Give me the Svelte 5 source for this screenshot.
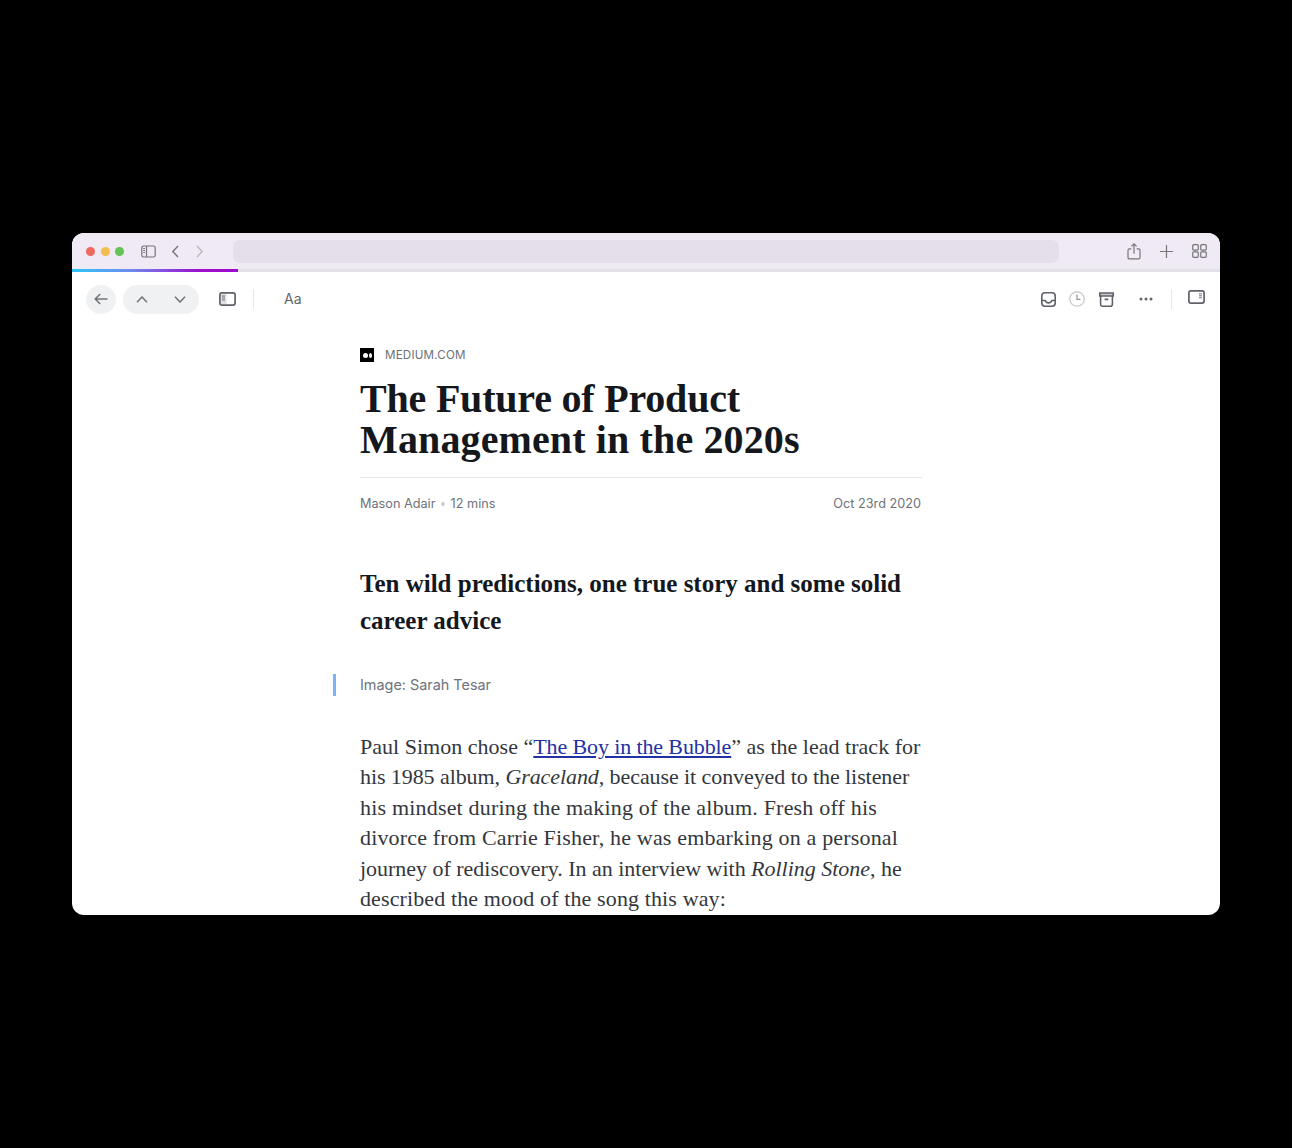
<script>
  const title = [
    { text: 'The Future of Product', cls: 't1' },
    { text: 'Management in the 2020s', cls: 't2' }
  ];
</script>

<div class="page">
  <div class="window">
    <header class="titlebar">
      <div class="lights">
        <span class="light red"></span>
        <span class="light yellow"></span>
        <span class="light green"></span>
      </div>
      <svg class="ic sidebar" width="15" height="13" viewBox="0 0 15 13" fill="none" stroke="#77747c" stroke-width="1.2">
        <rect x="0.8" y="1" width="13.4" height="11" rx="1.8" />
        <path d="M5.5 1v11M2.2 3.5h1.8M2.2 5.5h1.8M2.2 7.5h1.8" />
      </svg>
      <svg class="ic back" width="9" height="13" viewBox="0 0 9 13" fill="none" stroke="#77747c" stroke-width="1.4">
        <path d="M7 1 1.8 6.5 7 12" />
      </svg>
      <svg class="ic forward" width="9" height="13" viewBox="0 0 9 13" fill="none" stroke="#b9b6bd" stroke-width="1.4">
        <path d="M2 1l5.2 5.5L2 12" />
      </svg>
      <div class="urlbar"></div>
      <svg class="ic share" width="14" height="17" viewBox="0 0 15 19" fill="none" stroke="#77747c" stroke-width="1.3">
        <path d="M4.5 6.5H2.4a1.6 1.6 0 0 0-1.6 1.6v8.1a1.6 1.6 0 0 0 1.6 1.6h10.2a1.6 1.6 0 0 0 1.6-1.6V8.1a1.6 1.6 0 0 0-1.6-1.6h-2.1" />
        <path d="M7.5 12V1.2M4.6 3.8 7.5 1l2.9 2.8" />
      </svg>
      <svg class="ic plus" width="13" height="13" viewBox="0 0 13 13" fill="none" stroke="#77747c" stroke-width="1.2">
        <path d="M6.5 0v13M0 6.5h13" />
      </svg>
      <svg class="ic grid" width="15" height="14" viewBox="0 0 15 14" fill="none" stroke="#77747c" stroke-width="1.2">
        <rect x="0.7" y="0.7" width="5.6" height="5.4" rx="1" />
        <rect x="8.7" y="0.7" width="5.6" height="5.4" rx="1" />
        <rect x="0.7" y="7.9" width="5.6" height="5.4" rx="1" />
        <rect x="8.7" y="7.9" width="5.6" height="5.4" rx="1" />
      </svg>
    </header>
    <div class="progress"><div class="progress-fill"></div></div>

    <div class="toolbar">
      <button class="round" aria-label="Back">
        <svg width="14" height="12" viewBox="0 0 14 12" fill="none" stroke="#6f7379" stroke-width="1.5">
          <path d="M13.5 6H1.2M6.2 1 1.2 6l5 5" />
        </svg>
      </button>
      <div class="updown">
        <svg width="12" height="7" viewBox="0 0 12 7" fill="none" stroke="#6f7379" stroke-width="1.5"><path d="M1 6.2 6 1l5 5.2" /></svg>
        <svg width="12" height="7" viewBox="0 0 12 7" fill="none" stroke="#6f7379" stroke-width="1.5"><path d="M1 .8 6 6l5-5.2" /></svg>
      </div>
      <svg class="pane" width="17" height="14" viewBox="0 0 17 14" fill="none">
        <rect x="1.5" y="1.5" width="6" height="11" fill="#dfe0e2" />
        <rect x="0.9" y="0.9" width="15.2" height="12.2" rx="2" stroke="#5f6369" stroke-width="1.7" />
        <path d="M3 4h3M3 6h3M3 8h3" stroke="#6f7379" />
      </svg>
      <span class="vline first"></span>
      <span class="aa">Aa</span>
      <span class="spacer"></span>
      <svg class="inbox" width="15" height="15" viewBox="0 0 15 15" fill="none" stroke="#5f6369" stroke-width="1.6">
        <rect x="0.8" y="0.8" width="13.4" height="13.4" rx="3.2" />
        <path d="M.8 8.5h3.4c.6 1.6 1.8 2.4 3.3 2.4s2.7-.8 3.3-2.4h3.4" />
      </svg>
      <svg class="later" width="16" height="16" viewBox="0 0 16 16" fill="none" stroke="#c3c6ca" stroke-width="1.2">
        <circle cx="8" cy="8" r="7.2" />
        <path d="M8 3.6V8.4h3.4" stroke="#8f9398" />
      </svg>
      <svg class="archive" width="15" height="15" viewBox="0 0 15 15" fill="none" stroke="#5f6369" stroke-width="1.6">
        <path d="M.8 1h13.4v3H.8z" fill="#c9cbce" />
        <path d="M1.6 4v8.2a2 2 0 0 0 2 2h7.8a2 2 0 0 0 2-2V4M5.6 7.4h3.8" />
      </svg>
      <svg class="dots" width="14" height="4" viewBox="0 0 14 4" fill="#5f6369">
        <circle cx="2" cy="2" r="1.5" /><circle cx="7" cy="2" r="1.5" /><circle cx="12" cy="2" r="1.5" />
      </svg>
      <span class="vline second"></span>
      <svg class="rightpane" width="17" height="14" viewBox="0 0 17 14" fill="none">
        <rect x="0.9" y="0.9" width="15.2" height="12.2" rx="2" stroke="#5f6369" stroke-width="1.7" />
        <path d="M11 3.8h3M11 5.8h3M11 7.8h3" stroke="#6f7379" />
      </svg>
    </div>

    <article class="article">
      <div class="source">
        <span class="favicon"><i></i><i></i></span>
        <span class="domain">MEDIUM.COM</span>
      </div>
      <h1>
        {#each title as line}
          <span class={line.cls}>{line.text}</span>
        {/each}
      </h1>
      <div class="meta">
        <span>Mason Adair <b></b> 12 mins</span>
        <span>Oct 23rd 2020</span>
      </div>
      <h2>Ten wild predictions, one true story and some solid<br />career advice</h2>
      <p class="caption">Image: Sarah Tesar</p>
      <p class="body">
        <span class="l1">Paul Simon chose “<a href="#top">The Boy in the Bubble</a>” as the lead track for</span>
        <span class="l2">his 1985 album, <em>Graceland,</em> because it conveyed to the listener</span>
        <span class="l3">his mindset during the making of the album. Fresh off his</span>
        <span class="l4">divorce from Carrie Fisher, he was embarking on a personal</span>
        <span class="l5">journey of rediscovery. In an interview with <em>Rolling Stone</em>, he</span>
        <span class="l6">described the mood of the song this way:</span>
      </p>
    </article>
  </div>
</div>

<style>
  :global(body) {
    margin: 0;
    background: #000;
  }

  .page {
    height: 1148px;
    padding: 233px 72px 0;
    box-sizing: border-box;
    background: #000;
  }

  .window {
    width: 1148px;
    height: 682px;
    background: #fff;
    border-radius: 12px;
    overflow: hidden;
    font-family: Inter, "Liberation Sans", sans-serif;
  }

  .titlebar {
    height: 36px;
    background: #efeaf3;
    display: flex;
    align-items: center;
    box-sizing: border-box;
    padding-left: 14px;
  }

  .lights {
    display: flex;
    gap: 5.5px;
  }

  .light {
    width: 9px;
    height: 9px;
    border-radius: 50%;
  }
  .red { background: #ee6a5f; }
  .yellow { background: #f5bd4f; }
  .green { background: #61c454; }

  .ic { flex: none; }
  .sidebar { margin-left: 17px; }
  .back { margin-left: 15px; }
  .forward { margin-left: 15px; }

  .urlbar {
    width: 826px;
    height: 23px;
    margin-left: 29px;
    border-radius: 7px;
    background: #e4dfe8;
    flex: none;
  }

  .share { margin-left: 67.5px; }
  .plus { margin-left: 19.5px; }
  .grid { margin-left: 19px; }

  .progress {
    height: 3px;
    background: #e3e1e7;
  }

  .progress-fill {
    width: 166px;
    height: 3px;
    background: linear-gradient(90deg, #2cc4fb 0%, #6f8cf0 35%, #9a12d0 75%, #a00acb 100%);
  }

  .toolbar {
    height: 54px;
    display: flex;
    align-items: center;
    padding: 0 15px 0 14px;
  }

  .round {
    width: 30px;
    height: 29px;
    border: 0;
    padding: 0;
    border-radius: 50%;
    background: #f0f1f2;
    display: flex;
    align-items: center;
    justify-content: center;
  }

  .updown {
    width: 76px;
    height: 29px;
    margin-left: 7px;
    border-radius: 15px;
    background: #f0f1f2;
    display: flex;
    align-items: center;
    justify-content: space-between;
    padding: 0 13px;
    box-sizing: border-box;
  }

  .pane { margin-left: 20px; }

  .vline {
    width: 1px;
    height: 20px;
    background: #e6e7e9;
  }
  .vline.first { margin-left: 17px; }

  .aa {
    margin-left: 30px;
    margin-bottom: 2px;
    font-size: 14px;
    color: #63676d;
  }

  .spacer { flex: 1; }

  .later { margin-left: 13px; }
  .archive { margin-left: 14px; }
  .dots { margin-left: 25px; }
  .vline.second { margin-left: 18px; }
  .rightpane { margin-left: 16px; margin-top: -4px; }

  .article {
    width: 562px;
    margin-left: 288px;
  }

  .source {
    display: flex;
    align-items: center;
    gap: 11px;
    height: 14px;
    margin-top: 22px;
  }

  .favicon {
    width: 14px;
    height: 14px;
    background: #000;
    display: flex;
    align-items: center;
    justify-content: center;
    gap: 1px;
  }
  .favicon i {
    width: 5px;
    height: 5px;
    border-radius: 50%;
    background: #fff;
  }
  .favicon i + i {
    width: 3px;
  }

  .domain {
    font-size: 11.6px;
    letter-spacing: 0.2px;
    color: #6b7079;
  }

  h1 {
    margin: 16px 0 0;
    font-family: "Liberation Serif", serif;
    font-size: 40px;
    line-height: 41px;
    font-weight: 700;
    color: #14171c;
    white-space: nowrap;
    padding-bottom: 17px;
    border-bottom: 1px solid #e4e5e7;
  }
  h1 span { display: block; }
  .t1 { letter-spacing: -0.2px; }
  .t2 { letter-spacing: 0.13px; }

  .meta {
    display: flex;
    justify-content: space-between;
    margin-top: 17px;
    padding-right: 1px;
    font-size: 12.7px;
    line-height: 18px;
    color: #6e737b;
  }
  .meta b {
    display: inline-block;
    width: 4px;
    height: 4px;
    border-radius: 50%;
    background: #c9ccd0;
    vertical-align: 2px;
    margin: 0 2px;
  }

  h2 {
    margin: 53px 0 0;
    font-family: "Liberation Serif", serif;
    font-size: 25px;
    line-height: 36.5px;
    font-weight: 700;
    color: #14171c;
    white-space: nowrap;
  }

  .caption {
    margin: 36px 0 0;
    font-size: 14.4px;
    line-height: 20px;
    color: #6e737b;
    position: relative;
  }
  .caption::before {
    content: '';
    position: absolute;
    left: -27px;
    top: -1px;
    width: 3px;
    height: 22px;
    background: #7fb2f5;
  }

  .body {
    margin: 37px 0 0;
    font-family: "Liberation Serif", serif;
    font-size: 22px;
    line-height: 30.4px;
    color: #33373d;
    white-space: nowrap;
  }
  .body span { display: block; }
  .body a {
    color: #2231a5;
    letter-spacing: -0.12px;
  }
  .l1 { letter-spacing: 0.02px; }
  .l2 { letter-spacing: -0.08px; }
  .l3 { letter-spacing: 0.19px; }
  .l4 { letter-spacing: 0.17px; }
  .l5 { letter-spacing: -0.02px; }
  .l6 { letter-spacing: 0.12px; }
</style>
